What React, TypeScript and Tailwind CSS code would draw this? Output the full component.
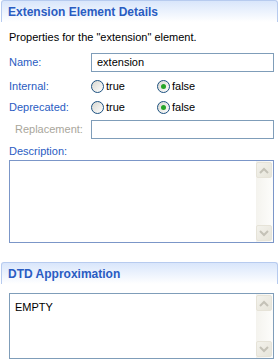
import React from 'react';

function SectionHeader({ title }: { title: string }) {
  return (
    <div className="h-[22px] ml-[1px] mr-[2px] flex items-center pl-[6px] border-t border-l border-r border-[#b7cbef] rounded-t-[3px] bg-gradient-to-b from-[#d9e6fb] to-white">
      <span className="font-bold text-[12px] text-[#2a5cc2] leading-none">{title}</span>
    </div>
  );
}

function Radio({ checked, label }: { checked?: boolean; label: string }) {
  return (
    <div className="flex items-center gap-[2px] w-[66px]">
      <span className="w-[13px] h-[13px] rounded-full border border-[#1c5180] bg-gradient-to-br from-[#d8d7d0] to-white flex items-center justify-center">
        {checked && <span className="w-[5px] h-[5px] rounded-full bg-[#27a527]" />}
      </span>
      <span>{label}</span>
    </div>
  );
}

function Arrow({ up }: { up?: boolean }) {
  return (
    <div className="w-[16px] h-[16px] rounded-[2px] border border-[#e6e3d8] bg-gradient-to-br from-[#f3f2ec] to-[#e7e5da] flex items-center justify-center">
      <svg width="10" height="7" viewBox="0 0 10 7">
        <polyline
          points={up ? '1,6 5,2 9,6' : '1,1 5,5 9,1'}
          fill="none"
          stroke="#c4c2b7"
          strokeWidth="2"
        />
      </svg>
    </div>
  );
}

function TextBox({ height, border, children }: { height: string; border: string; children?: React.ReactNode }) {
  return (
    <div className={`flex border bg-white ${height} ${border}`}>
      <div className="flex-1 pl-[5px] pt-[5px] text-black">{children}</div>
      <div className="w-[17px] flex flex-col justify-between py-[1px] bg-gradient-to-r from-[#f4f3ee] to-[#fdfdfb]">
        <Arrow up />
        <Arrow />
      </div>
    </div>
  );
}

export default function App() {
  return (
    <div className="w-[280px] h-[363px] bg-white overflow-hidden font-['Liberation_Sans',Arial,sans-serif] text-[11px] text-black">
      <SectionHeader title="Extension Element Details" />
      <div className="pl-[9px] pr-[6px]">
        <p className="mt-[9px] h-[13px] leading-[13px]">Properties for the "extension" element.</p>

        <div className="mt-[9px] flex items-center h-[19px]">
          <span className="w-[82px] text-[#2a5cc2]">Name:</span>
          <div className="flex-1 h-[19px] border border-[#7f9db9] flex items-center pl-[5px]">extension</div>
        </div>

        <div className="mt-[4px] flex items-center h-[20px]">
          <span className="w-[82px] text-[#2a5cc2]">Internal:</span>
          <Radio label="true" />
          <Radio label="false" checked />
        </div>

        <div className="mt-[1px] flex items-center h-[20px]">
          <span className="w-[82px] text-[#2a5cc2]">Deprecated:</span>
          <Radio label="true" />
          <Radio label="false" checked />
        </div>

        <div className="mt-[3px] flex items-center h-[19px]">
          <span className="w-[82px] pl-[6px] text-[#a9a69b]">Replacement:</span>
          <div className="flex-1 h-[19px] border border-[#7f9db9]" />
        </div>

        <p className="mt-[6px] h-[13px] leading-[13px] text-[#2a5cc2]">Description:</p>
        <div className="mt-[2px]">
          <TextBox height="h-[83px]" border="border-[#7b96c8]" />
        </div>
      </div>

      <div className="mt-[19px]">
        <SectionHeader title="DTD Approximation" />
      </div>
      <div className="pl-[9px] pr-[6px] mt-[9px]">
        <TextBox height="h-[66px]" border="border-[#7f9db9]">EMPTY</TextBox>
      </div>
    </div>
  );
}
